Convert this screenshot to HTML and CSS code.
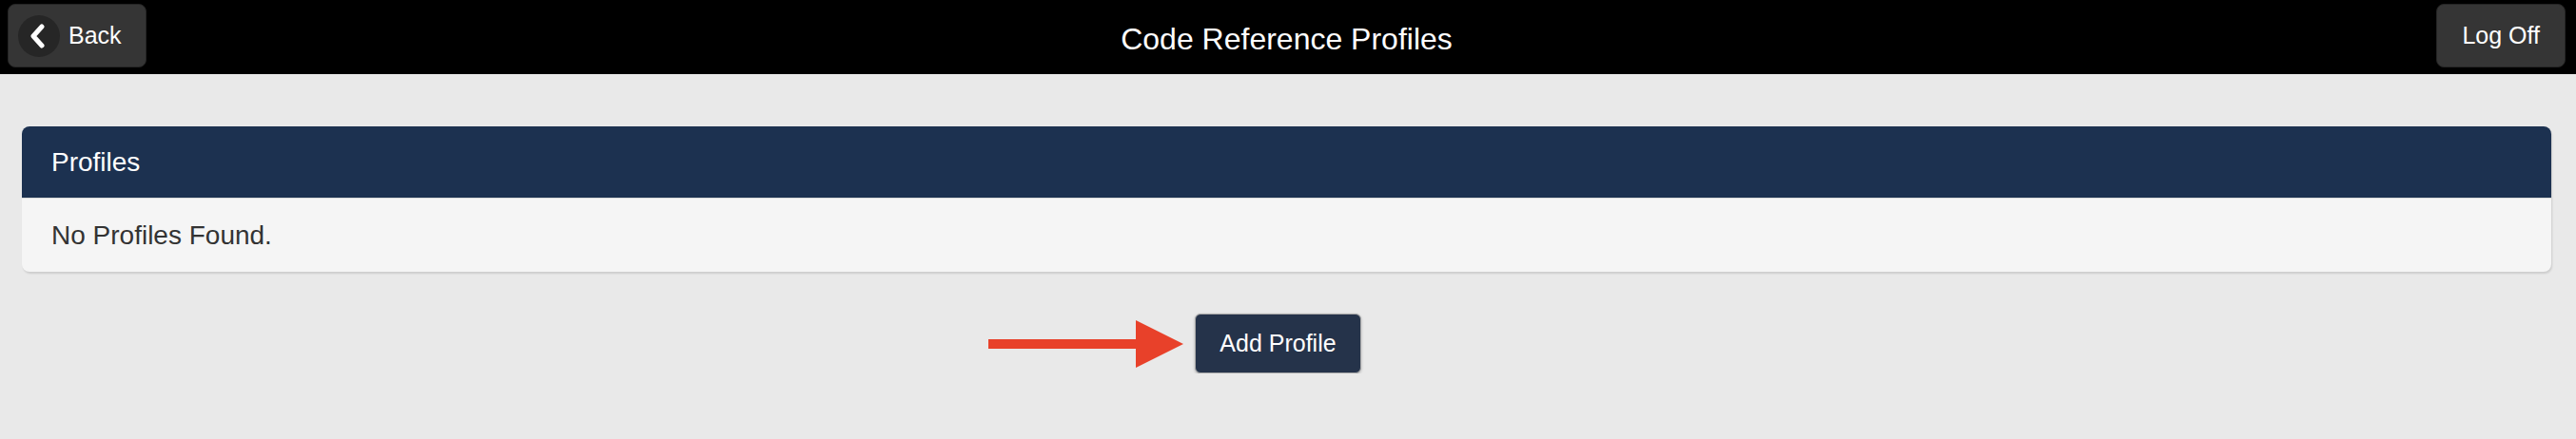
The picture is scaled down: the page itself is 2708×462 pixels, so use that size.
FILE: index.html
```html
<!DOCTYPE html>
<html lang="en">
<head>
    <meta charset="UTF-8">
    <meta name="viewport" content="width=device-width, initial-scale=1.0">
    <title>Code Reference Profiles</title>
    <link rel="stylesheet" href="styles.css">
</head>
<body>
    <header class="top-bar">
        <div class="bar-left">
            <button class="bar-btn back-btn">
                <span class="back-icon">
                    <svg width="22" height="26" viewBox="0 0 22 26">
                        <path d="M15 3 L6 13 L15 23" fill="none" stroke="#fff" stroke-width="5" stroke-linecap="round" stroke-linejoin="round"/>
                    </svg>
                </span>
                <span>Back</span>
            </button>
        </div>
        <h1 class="page-title">Code Reference Profiles</h1>
        <div class="bar-right">
            <button class="bar-btn logoff-btn">Log Off</button>
        </div>
    </header>

    <main class="content">
        <section class="panel">
            <div class="panel-heading">Profiles</div>
            <div class="panel-body">No Profiles Found.</div>
        </section>

        <div class="actions">
            <div class="add-wrap">
                <svg class="pointer-arrow" width="205" height="50" viewBox="0 0 205 50">
                    <rect x="0" y="20" width="160" height="10" fill="#e8412a"/>
                    <polygon points="155,0 205,25 155,50" fill="#e8412a"/>
                </svg>
                <button class="add-btn">Add Profile</button>
            </div>
        </div>
    </main>
</body>
</html>
```

FILE: styles.css
```css
body {
    margin: 0;
    padding: 0;
    font-family: 'Liberation Sans', Arial, sans-serif;
    background: #e9e9e9;
    color: #333;
}

button {
    font-family: inherit;
    cursor: pointer;
}

.top-bar {
    height: 78px;
    box-sizing: border-box;
    padding: 4px 11px 0 8px;
    background: #000;
    display: grid;
    grid-template-columns: 1fr auto 1fr;
    align-items: start;
}

.bar-right {
    display: flex;
    justify-content: flex-end;
}

.bar-btn {
    height: 67px;
    box-sizing: border-box;
    background: #353535;
    border: 1px solid #252525;
    border-radius: 8px;
    color: #fff;
    font-size: 25px;
    display: flex;
    align-items: center;
}

.back-btn {
    width: 146px;
    padding: 0 0 0 10px;
    gap: 9px;
}

.back-icon {
    width: 44px;
    height: 44px;
    border-radius: 50%;
    background: #262626;
    display: flex;
    align-items: center;
    justify-content: center;
}

.back-icon svg {
    margin-left: -2px;
}

.logoff-btn {
    padding: 0 26px;
}

.page-title {
    margin: 0;
    height: 74px;
    display: flex;
    align-items: center;
    font-size: 32px;
    font-weight: normal;
    color: #fff;
}

.content {
    padding: 55px 26px 0 23px;
}

.panel {
    border-radius: 8px;
    background: #f5f5f5;
    box-shadow: 1px 2px 2px rgba(0, 0, 0, 0.12);
    overflow: hidden;
}

.panel-heading {
    height: 76px;
    box-sizing: border-box;
    padding: 0 31px;
    display: flex;
    align-items: center;
    background: #1c3150;
    border-bottom: 1px solid #dcdcdc;
    color: #fff;
    font-size: 28px;
}

.panel-body {
    height: 77px;
    box-sizing: border-box;
    padding: 0 31px;
    display: flex;
    align-items: center;
    font-size: 28px;
    color: #333;
}

.actions {
    display: flex;
    justify-content: center;
    margin-top: 44px;
}

.add-wrap {
    position: relative;
    margin-right: 18px;
}

.pointer-arrow {
    position: absolute;
    right: 100%;
    top: 7px;
    margin-right: 12px;
}

.add-btn {
    height: 63px;
    padding: 0 25px;
    background: #25334a;
    border: 1px solid #a9a9a9;
    border-radius: 6px;
    box-shadow: 0 1px 3px rgba(0, 0, 0, 0.25);
    color: #fff;
    font-size: 25px;
}
```
